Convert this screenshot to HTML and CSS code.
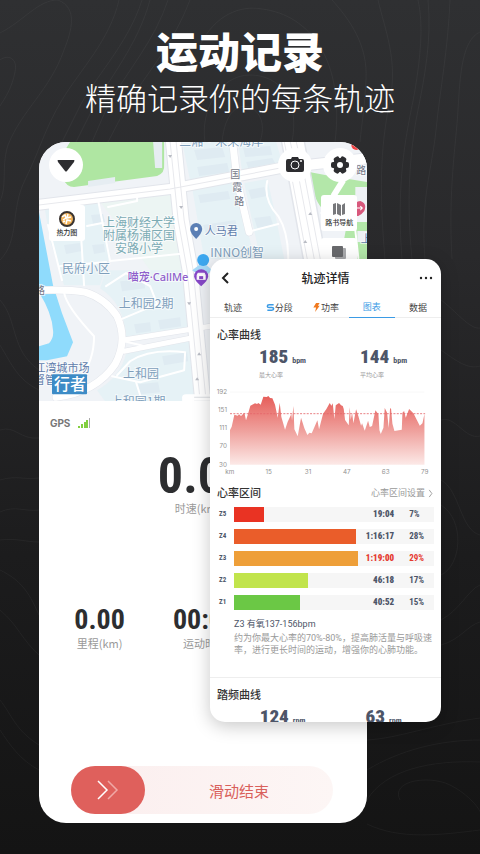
FILE: index.html
```html
<!DOCTYPE html>
<html lang="zh-CN">
<head>
<meta charset="utf-8">
<meta name="viewport" content="width=device-width, initial-scale=1">
<title>运动记录</title>
<link rel="stylesheet" href="styles.css">
</head>
<body>
<main class="poster">
  <svg class="contours" viewBox="0 0 480 854" preserveAspectRatio="xMidYMid slice" aria-hidden="true">
    <path d="M0 33C25 20 38 0 58 0C78 8 72 30 64 50C50 90 22 110 8 145C0 170 10 190 -5 210M0 60C8 54 18 58 15 72C12 88 5 98 0 106M119 0C110 40 80 70 62 100S40 150 25 180S20 240 0 260M142 0C128 45 92 80 78 110L62 142M150 0C138 45 108 80 92 110L76 142M168 0C155 40 128 70 108 105L92 142M190 0C175 40 150 70 130 100L108 142M200 45C215 15 240 5 262 9C310 15 345 60 335 142M205 142C200 110 220 75 250 75C280 75 300 100 292 142M222 142C225 112 238 102 252 108C264 116 264 130 260 142M332 0C350 20 368 45 366 80S362 120 360 142M378 0C385 30 398 60 390 100S378 180 385 259M418 0C424 25 420 60 415 90S395 170 402 259M428 0C432 40 424 80 418 110S405 190 412 259M450 0C448 50 440 90 436 130S420 200 425 259M480 32C462 40 460 75 458 110S448 190 452 259"/>
    <path d="M0 300C18 320 10 350 39 370M0 345C12 365 18 380 39 390M0 430C15 425 20 440 39 438M0 480C18 475 22 480 39 478M0 512C15 505 25 512 39 510M0 540C18 538 25 542 39 542M0 570C20 580 28 590 39 615M0 610C18 625 22 640 39 655M0 700C12 715 15 730 39 745M0 730C10 745 20 760 39 770M441 300C455 310 470 330 480 328M441 350C455 360 468 370 480 366M441 420C455 415 465 440 480 436M441 480C460 490 460 530 480 535M441 505C465 520 462 565 441 575M441 620C460 610 468 590 480 585M441 645C460 640 468 625 480 622M367 740C400 738 430 725 480 718M367 770C400 750 440 740 480 740M367 800C385 770 430 760 480 762M400 800C390 780 430 775 450 785S480 810 480 812M367 824C400 840 440 835 480 830"/>
  </svg>

  <header class="headline">
    <h1>运动记录</h1>
    <p>精确记录你的每条轨迹</p>
  </header>

  <div class="stage">
    <section class="phone" aria-label="运动中">
      <div class="map">
        <svg class="map-canvas" viewBox="39 142 328 259" preserveAspectRatio="xMidYMin slice" role="img" aria-label="地图">
          <rect x="39" y="142" width="328" height="259" fill="#f0f3f7"/>
          <g fill="#e6f2f6">
            <path d="M182 142L228 142L236 174L190 181ZM238 142L276 142L283 166L242 173ZM192 188L236 181L247 230L255 259H204ZM244 183L267 179L275 214L284 259H260Z"/>
            <path d="M100 202L172 194L186 259L190 270H150L110 215Z" fill="#ecf5f3"/>
            <path d="M106 270L188 270L192 328L126 337Q124 303 100 288ZM126 353L192 340L203 401H105L97 390Q121 376 126 353ZM44 204L98 199L110 255L100 285H64L50 240Z"/>
          </g>
          <g fill="#dfebf2">
            <path d="M194 150L222 147L225 157L197 160ZM197 167L227 163L229 172L199 176ZM243 148L270 146L272 155L245 157ZM246 162L272 158L275 163L248 168ZM198 195L228 191L230 199L200 203ZM203 225L235 220L238 229L206 234ZM248 190L264 187L267 196L251 199ZM254 218L270 216L273 225L257 228ZM120 281L144 279L145 288L122 291ZM158 320L180 317L181 326L160 329ZM134 324L150 322L151 331L136 333ZM162 356L187 352L188 361L164 365ZM138 384L158 382L160 392L140 394ZM91 215L103 214L105 222L93 224ZM92 245L104 244L105 252L94 254ZM64 245L80 243L82 251L66 254Z"/>
          </g>
          <path d="M70 142H164V164Q165 173 157 176L74 187Q66 187 63 178L59 160Z" fill="#afe6a2"/>
          <path d="M153 142H162L162 168L155 168ZM88 181L115 177V183L88 187Z" fill="#e6edf2"/>
          <path d="M309 172L330 176L367 182V212H325Q312 200 309 172ZM347 222H367V259H340Z" fill="#b3e7a9"/>
          <path d="M355 187H367V212H355ZM357 231H367V242H357Z" fill="#eef1f5"/>
          <path d="M39 212L53 285L62 313L73 342L67 356L47 360H39V346L49 343Q54 338 53 330Q52 313 39 292Z" fill="#8fdbfc"/>
          <g fill="none" stroke="#e2e5eb" stroke-linecap="round" stroke-linejoin="round">
            <path d="M36 205L170 189L280 168L370 158" stroke-width="12"/>
            <path d="M173 138L181 220L190 270L203 405" stroke-width="17"/>
            <path d="M292 138L300 180L315 262" stroke-width="24"/>
            <path d="M232 138L237 181L249 232" stroke-width="8"/>
            <path d="M39 290Q70 289 85 292Q105 298 117 316Q128 340 115 364Q96 392 56 397" stroke-width="8"/>
            <path d="M122 340L210 326M124 351L195 337" stroke-width="6"/>
          </g>
          <g fill="none" stroke="#fff" stroke-linecap="round" stroke-linejoin="round">
            <path d="M36 205L170 189L280 168L370 158" stroke-width="10"/>
            <path d="M173 138L181 220L190 270L203 405" stroke-width="15"/>
            <path d="M292 138L300 180L315 262" stroke-width="21"/>
            <path d="M232 138L237 181L249 232" stroke-width="7"/>
            <path d="M39 290Q70 289 85 292Q105 298 117 316Q128 340 115 364Q96 392 56 397" stroke-width="7"/>
            <path d="M122 340L210 326M124 351L195 337" stroke-width="5"/>
            <path d="M79 201L84 285M98 200L110 261L188 253M108 207L137 201V190M60 266L106 262M87 226L102 223M48 225L62 280M64 292Q66 306 94 336Q94 360 81 376M106 286L126 273L150 286L157 304L119 320M124 341L145 346L187 338M117 375L130 361Q150 348 185 352L184 370L140 382L112 376M136 382L142 401M267 181Q263 200 278 216Q288 232 288 259M247 232L278 224M343 180L329 203L321 213M352 202L358 258" stroke-width="2"/>
          </g>
          <path d="M39 205L170 189L280 168M170 142L178 220L187 270L200 401M176 142L184 220L193 270L206 401M284 142L292 180L307 259M296 142L305 180L320 259M290 142L299 180L314 259" fill="none" stroke="#e8e9ed"/>
          <path d="M343 180L333 196" stroke="#fff" stroke-width="6"/>
          <path d="M170 158l-2-3h4zM181 209l-2-3h4zM189 305l-2-3h4zM199 352l2 3h-4zM197 377l2 3h-4zM310 212l2 3h-4zM305 240l2 3h-4z" fill="#b9bcc4"/>
          <circle cx="356" cy="145" r="5" fill="#ef4444"/>
          <path d="M182 397Q182 394 186 394H212V402H182Z" fill="#fff"/>
          <path d="M194 397H212M194 401H212" stroke="#dcdee2"/>
          <g class="map-label">
            <text x="139" y="227" class="school">上海财经大学</text>
            <text x="139" y="240" class="school">附属杨浦区国</text>
            <text x="139" y="253" class="school">安路小学</text>
            <text x="86" y="273">民府小区</text>
            <text x="146" y="308">上和园2期</text>
            <text x="141" y="378">上和园</text>
            <text x="138" y="406">上和园1期</text>
            <text x="221" y="146">三湘·未来海岸</text>
            <text x="237" y="257">INNO创智</text>
            <text x="221" y="235" class="place">人马君</text>
            <text x="158" y="281" class="shop">喵宠·CallMe</text>
            <text x="62" y="372" class="place">江湾城市场</text>
            <text x="45" y="384" class="place">督管</text>
            <text x="40" y="294" class="road">路</text>
            <text x="361" y="174" class="road">路</text>
            <text x="235" y="178" class="road">国</text>
            <text x="237" y="191" class="road">霞</text>
            <text x="239" y="205" class="road">路</text>
            <text x="366" y="243" class="place">上</text>
          </g>
          <path d="M196 239Q190 233 190 229A6 6 0 1 1 202 229Q202 233 196 239Z" fill="#5c7fb5"/>
          <circle cx="196" cy="229" r="2" fill="#fff"/>
          <path d="M355 216Q352 201 360 201Q367 203 364 211Q361 215 358 216Z" fill="#d8587c"/>
          <path d="M356 208H362M360 206L362 208L360 210" stroke="#fff" fill="none"/>
          <path d="M203 262L212 270L203 278L192 270Z" fill="#a8daf8"/>
          <circle cx="203" cy="260" r="6" fill="#3ca7ef"/>
          <path d="M201 286Q194 280 194 276A7 7 0 1 1 208 276Q208 280 201 286Z" fill="#8748c8"/>
          <path d="M198 273H204L205 275V279H197V275ZM199 277H203" fill="#fff" stroke="#fff"/>
          <path d="M199 276H203V279H199Z" fill="#8748c8"/>
          <rect x="52" y="374" width="35" height="20" rx="1" fill="#3c8bc6"/>
          <text x="70" y="390" class="brand">行者</text>
        </svg>
        <div class="map-controls">
          <div class="map-top">
            <button class="round" type="button" aria-label="收起"><svg viewBox="0 0 34 34"><path d="M9 12H25Q26 12 25 14L18 23Q17 24 16 23L9 14Q8 12 9 12Z" fill="#2d2d30"/></svg></button>
            <button class="round push" type="button" aria-label="拍照"><svg viewBox="0 0 34 34"><path d="M10 11H13L14 9H20L21 11H24Q26 11 26 13V22Q26 24 24 24H10Q8 24 8 22V13Q8 11 10 11Z" fill="#2d2d30"/><circle cx="17" cy="17" r="4" fill="none" stroke="#fff"/><circle cx="23" cy="13" r="1" fill="#fff"/></svg></button>
            <button class="round" type="button" aria-label="设置"><svg viewBox="0 0 34 34"><g fill="#2d2d30"><circle cx="17" cy="17" r="7"/><rect x="14" y="8" width="6" height="18" rx="2" transform="rotate(30 17 17)"/><rect x="14" y="8" width="6" height="18" rx="2" transform="rotate(90 17 17)"/><rect x="14" y="8" width="6" height="18" rx="2" transform="rotate(150 17 17)"/></g><circle cx="17" cy="17" r="3" fill="#fff"/></svg></button>
          </div>
          <div class="map-sides">
            <button class="tool heat" type="button"><svg viewBox="0 0 18 18"><circle cx="9" cy="9" r="7" fill="#f3b55c" stroke="#3a3431" stroke-width="2"/><path d="M4 7L7 5L8 8L5 10M10 4L9 8L13 7M8 14L9 10L13 11M5 12L7 11" fill="none" stroke="#fff" stroke-width="1.500"/></svg>热力图</button>
            <div class="tool-stack">
              <button class="tool" type="button"><svg viewBox="0 0 18 18"><path d="M3 4L6 3V14L3 15ZM7 3L11 5V16L7 14ZM12 5L15 3V14L12 15Z" fill="#77787b"/></svg>路书导航</button>
              <button class="tool layers" type="button" aria-label="图层"><svg viewBox="0 0 18 18"><rect x="5" y="5" width="11" height="11" rx="1" fill="#a9aaad"/><rect x="2" y="3" width="11" height="11" rx="1" fill="#68696c"/></svg></button>
            </div>
          </div>
        </div>
      </div>

      <div class="gps"><span>GPS</span><svg viewBox="0 0 13 12" aria-hidden="true"><path d="M0 9H2V11H0ZM3 7H5V11H3ZM6 5H8V11H6ZM8 3H10V11H8Z" fill="#83cf40"/><path d="M11 1H12V11H11Z" fill="#aaa"/></svg></div>

      <div class="speed"><strong>0.00</strong><span>时速(km/h)</span></div>
      <div class="totals">
        <div><strong>0.00</strong><span>里程(km)</span></div>
        <div><strong>00:00</strong><span>运动时间</span></div>
      </div>
      <button class="slide" type="button">
        <span class="thumb"><svg viewBox="0 0 22 20" aria-hidden="true"><path d="M1 1L10 10L1 19" stroke="#fff"/><path d="M11 1L20 10L11 19" stroke="#f0a8a5"/></svg></span>
        <span class="slide-text">滑动结束</span>
      </button>
    </section>

    <section class="detail" aria-label="轨迹详情">
      <header class="detail-head">
        <button type="button" aria-label="返回"><svg viewBox="0 0 12 14"><path d="M9 2L4 7L9 12" fill="none" stroke="#222" stroke-width="2"/></svg></button>
        <h2>轨迹详情</h2>
        <button type="button" aria-label="更多"><svg viewBox="0 0 14 14"><g fill="#222"><circle cx="2" cy="7" r="1.2"/><circle cx="7" cy="7" r="1.2"/><circle cx="12" cy="7" r="1.2"/></g></svg></button>
      </header>
      <nav class="tabs">
        <a href="#track">轨迹</a>
        <a href="#laps"><svg viewBox="0 0 9 10" aria-hidden="true"><path d="M8 2H3Q1 2 1 3.500T3 5H6Q8 5 8 6.500T6 8H1" fill="none" stroke="#3b9be5" stroke-width="1.700"/></svg>分段</a>
        <a href="#power"><svg viewBox="0 0 9 10" aria-hidden="true"><path d="M4 0H8L6 3H8L3 10L4 5H1Z" fill="#f07a20"/></svg>功率</a>
        <a href="#charts" class="active" aria-current="page">图表</a>
        <a href="#data">数据</a>
      </nav>

      <section class="block">
        <h3>心率曲线</h3>
        <div class="stats">
          <div><p><strong>185</strong>bpm</p><span>最大心率</span></div>
          <div><p><strong>144</strong>bpm</p><span>平均心率</span></div>
        </div>
      </section>
      <svg class="chart" viewBox="15 18 693 270" role="img" aria-label="心率曲线图">
        <defs><linearGradient id="hr" x1="0" y1="48" x2="0" y2="254" gradientUnits="userSpaceOnUse"><stop offset="0" stop-color="#e65d59"/><stop offset=".5" stop-color="#efa09c"/><stop offset="1" stop-color="#fce9e7"/></linearGradient></defs>
        <path d="M75 36H658" stroke="#f5f5f5" stroke-width="2"/>
        <path d="M75 254V150L80 140L88 104L98 107L102 103L108 108L118 98L123 121L128 105L136 77L150 70L156 72L160 69L167 74L175 50L185 51L190 48L195 54L202 55L210 74L218 113L224 68L229 111L240 149L248 125L259 102L261 122L265 78L268 148L278 169L288 113L298 145L307 165L313 158L320 160L337 121L342 148L354 101L364 87L374 69L379 77L383 70L388 117L392 76L402 69L408 76L413 78L416 87L420 120L431 136L434 82L437 119L441 98L445 130L453 88L460 109L468 137L471 130L479 152L489 122L494 141L501 138L511 91L520 103L523 151L527 162L535 143L539 84L546 98L551 144L555 84L558 87L562 131L568 153L590 149L592 98L597 93L602 113L612 87L625 100L644 137L652 130L658 102V254Z" fill="url(#hr)"/>
        <path d="M75 101H660" stroke="#e4666b" stroke-width="2.500" stroke-dasharray="6 4"/>
        <g class="ticks-y"><text x="66" y="42">192</text><text x="66" y="97">151</text><text x="66" y="151">111</text><text x="66" y="205">70</text><text x="66" y="260">30</text></g>
        <g class="ticks-x"><text x="74" y="281">km</text><text x="191" y="281">15</text><text x="309" y="281">31</text><text x="425" y="281">47</text><text x="542" y="281">63</text><text x="659" y="281">79</text></g>
      </svg>

      <section class="block zones">
        <div class="zones-head"><h3>心率区间</h3><a href="#zones">心率区间设置<svg viewBox="0 0 6 10" aria-hidden="true"><path d="M1 1L4 5L1 9" fill="none" stroke="#999"/></svg></a></div>
        <ul>
          <li><span>Z5</span><div class="track"><i class="z5" style="width:15%"></i><b>19:04</b><em>7%</em></div></li>
          <li><span>Z4</span><div class="track"><i class="z4" style="width:61%"></i><b>1:16:17</b><em>28%</em></div></li>
          <li class="current"><span>Z3</span><div class="track"><i class="z3" style="width:62%"></i><b>1:19:00</b><em>29%</em></div></li>
          <li><span>Z2</span><div class="track"><i class="z2" style="width:37%"></i><b>46:18</b><em>17%</em></div></li>
          <li><span>Z1</span><div class="track"><i class="z1" style="width:33%"></i><b>40:52</b><em>15%</em></div></li>
        </ul>
        <div class="note">
          <h4>Z3 有氧137-156bpm</h4>
          <p>约为你最大心率的70%-80%，提高肺活量与呼吸速率，进行更长时间的运动，增强你的心肺功能。</p>
        </div>
      </section>

      <section class="block cadence">
        <h3>踏频曲线</h3>
        <div class="stats">
          <div><p><strong>124</strong>rpm</p></div>
          <div><p><strong>63</strong>rpm</p></div>
        </div>
      </section>
    </section>
  </div>
</main>
</body>
</html>
```
FILE: styles.css
```css
* { box-sizing: border-box; }
:root {
  --sans: "Noto Sans CJK SC", "Noto Sans", sans-serif;
  --narrow: "Liberation Sans Narrow", "Roboto Condensed", "DejaVu Sans Condensed", sans-serif;
}
body, h1, h2, h3, h4, p, ul { margin: 0; padding: 0; }
body { background: #161616; color: #333; font-family: var(--sans); }
button { border: 0; padding: 0; background: none; font: inherit; color: inherit; }
a { color: inherit; text-decoration: none; }
svg { display: block; }

.poster {
  position: relative;
  min-height: 100vh;
  padding: 25px 0 31px;
  overflow: hidden;
  background: linear-gradient(#2f3032, #29292b 30%, #1c1c1d 65%, #141414);
}
.contours { position: absolute; inset: 0; width: 100%; height: 100%; }
.contours path { fill: none; stroke: #fff; stroke-opacity: .04; }

.headline { position: relative; color: #fff; text-align: center; padding-bottom: 23px; }
.headline h1 { font-size: 42px; line-height: 50px; font-weight: 900; }
.headline p { font-size: 31px; line-height: 44px; font-weight: 300; }

.stage { position: relative; padding: 0 23.5% 0 8.1%; }
.phone { background: #fff; border-radius: 27px; overflow: hidden; padding-bottom: 9px; }

.map { position: relative; height: 259px; }
.map-canvas { width: 100%; height: 100%; }
.map-label text { font-size: 12px; text-anchor: middle; fill: #7f9fbb; stroke: #fff; stroke-width: 2px; stroke-opacity: .6; paint-order: stroke; }
.map-label .school { fill: #7babb4; }
.map-label .place { font-size: 11px; fill: #5f7cab; }
.map-label .shop { font-family: "Noto Sans", "Noto Sans CJK SC", sans-serif; font-size: 11px; font-weight: 500; fill: #8f5fcb; }
.map-label .road { font-size: 10px; fill: #757988; }
.brand { font-size: 16px; font-weight: 500; fill: #fff; text-anchor: middle; }
.map-controls { position: absolute; inset: 0; padding: 6px 10px; }
.map-top { display: flex; gap: 11px; }
.round { width: 34px; height: 34px; border-radius: 50%; background: #fff; }
.push { margin-left: auto; }
.map-sides { display: flex; justify-content: space-between; align-items: flex-start; padding-top: 13px; }
.tool { display: flex; flex-direction: column; align-items: center; justify-content: center; width: 36px; height: 36px; border-radius: 3px; background: #fff; font-size: 7px; line-height: 9px; white-space: nowrap; font-weight: 500; }
.tool svg { width: 18px; height: 18px; }
.heat { margin-top: 10px; }
.layers { padding-bottom: 9px; }
.tool-stack { display: flex; flex-direction: column; gap: 7px; }

.gps { display: flex; align-items: center; gap: 8px; padding: 14px 11px 0; font: 700 10px/16px Inter, sans-serif; color: #777; }
.gps svg { width: 13px; height: 12px; }
.speed { display: flex; flex-direction: column; align-items: center; padding-top: 20px; }
.speed strong { font: 700 50px/50px var(--narrow); }
.speed span, .totals span { font-size: 11px; line-height: 14px; color: #999; }
.totals { display: grid; grid-template-columns: repeat(3, 1fr); padding: 89px 4px 0 8px; }
.totals div { display: flex; flex-direction: column; align-items: center; }
.totals strong { font: 700 28px/32px var(--narrow); white-space: nowrap; }
.speed strong, .totals strong { color: #2d2e30; }
.slide { display: flex; align-items: center; width: calc(100% - 66px); height: 48px; margin: 116px 34px 0 32px; border-radius: 24px; background: linear-gradient(90deg, #fbeeee, #fdf6f5); }
.thumb { display: grid; place-items: center; width: 74px; height: 48px; border-radius: 24px; background: #df605c; }
.thumb svg { width: 22px; height: 20px; fill: none; stroke-width: 1.500; }
.slide-text { flex: 1; font-size: 15px; color: #d9605b; }

.detail {
  position: absolute;
  top: 117px;
  left: 43.75%;
  right: 8.1%;
  height: 463px;
  overflow: hidden;
  border-radius: 15px;
  background: #fff;
  box-shadow: 0 4px 18px rgba(0, 0, 0, .22);
}
.detail-head { display: flex; align-items: center; justify-content: space-between; height: 37px; padding: 0 8px; }
.detail-head svg { width: 14px; height: 14px; }
.detail-head h2 { font-size: 12px; line-height: 18px; font-weight: 500; color: #222; }
.tabs { display: grid; grid-template-columns: repeat(5, 1fr); height: 22px; border-bottom: 1px solid #eee; font-size: 9px; line-height: 21px; color: #444; }
.tabs a { display: flex; align-items: center; justify-content: center; height: 22px; }
.tabs svg { width: 9px; height: 9px; }
.tabs .active { color: #3b9be5; border-bottom: 1px solid #3b9be5; }
.block { padding: 0 7px; }
h3 { font-size: 11px; line-height: 16px; font-weight: 500; color: #333; }
.block h3 { padding-top: 8px; }
.stats { display: grid; grid-template-columns: 1fr 1fr; padding: 5px 0 0 15px; justify-items: center; color: #4d5568; }
.stats p { font: 700 8px/20px var(--narrow); }
.stats strong { margin-right: 4px; font-size: 19px; }
.stats span { display: block; font-size: 6px; line-height: 8px; color: #999; }
.chart { width: 100%; height: auto; margin-top: 7px; }
.chart text { font: 19px Inter, sans-serif; fill: #929292; }
.ticks-y { text-anchor: end; }
.ticks-x { text-anchor: middle; }

.zones-head { display: flex; justify-content: space-between; align-items: flex-end; }
.zones-head a { display: flex; align-items: center; gap: 3px; font-size: 9px; line-height: 14px; color: #999; }
.zones-head svg { width: 6px; height: 9px; }
.zones ul { display: grid; gap: 7px; padding-top: 7px; list-style: none; }
.zones li { display: flex; align-items: center; height: 15px; font: 700 9px/15px var(--narrow); color: #4d5568; }
.zones li > span { width: 17px; padding-left: 2px; font-size: 7px; }
.track { position: relative; flex: 1; display: grid; grid-template-columns: 1fr 40px; height: 15px; background: #f6f6f6; }
.track i { position: absolute; left: 0; top: 0; height: 15px; }
.track b { text-align: right; }
.track em { padding-left: 15px; font-style: normal; }
.current b, .current em { color: #e53a30; }
.z5 { background: #e93323; }
.z4 { background: #ea5d2a; }
.z3 { background: #ee9f39; }
.z2 { background: #c1e44c; }
.z1 { background: #6bc845; }
.note { padding: 6px 0 21px 17px; font-family: Roboto, "Noto Sans CJK SC", sans-serif; font-size: 9px; line-height: 12px; color: #999; }
.note h4 { font-size: 9px; line-height: 16px; font-weight: 400; color: #4d5568; }
.cadence { border-top: 1px solid #eee; }
```
